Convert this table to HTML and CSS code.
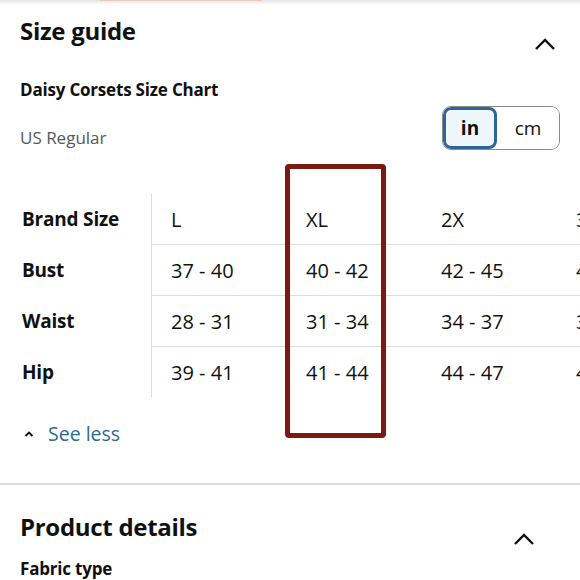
FILE: index.html
```html
<!DOCTYPE html>
<html lang="en">
<head>
  <meta charset="UTF-8" />
  <meta name="viewport" content="width=device-width, initial-scale=1.0"/>
  <title>Size guide</title>
  <link rel="stylesheet" href="styles.css">
</head>
<body>
  <div class="topbar"><span class="topbar-tab"></span></div>

  <section class="panel size-guide">
    <div class="panel-head">
      <h2>Size guide</h2>
      <svg class="chevron" width="22" height="14" viewBox="0 0 22 14">
        <path d="M2 12 L11 3 L20 12" fill="none" stroke="#111" stroke-width="2.4"/>
      </svg>
    </div>

    <h3>Daisy Corsets Size Chart</h3>

    <div class="unit-row">
      <span class="region">US Regular</span>
      <div class="unit-toggle">
        <button class="unit active">in</button>
        <button class="unit">cm</button>
      </div>
    </div>

    <div class="chart-wrap">
      <table class="chart">
        <tr>
          <th>Brand Size</th>
          <td>L</td>
          <td>XL</td>
          <td>2X</td>
          <td>3X</td>
        </tr>
        <tr>
          <th>Bust</th>
          <td>37 - 40</td>
          <td>40 - 42</td>
          <td>42 - 45</td>
          <td>45 - 48</td>
        </tr>
        <tr>
          <th>Waist</th>
          <td>28 - 31</td>
          <td>31 - 34</td>
          <td>34 - 37</td>
          <td>37 - 40</td>
        </tr>
        <tr>
          <th>Hip</th>
          <td>39 - 41</td>
          <td>41 - 44</td>
          <td>44 - 47</td>
          <td>47 - 50</td>
        </tr>
      </table>
      <div class="highlight"></div>
    </div>

    <a href="#" class="see-less">
      <svg width="10" height="7" viewBox="0 0 10 7">
        <path d="M1.5 6 L5 2.5 L8.5 6" fill="none" stroke="#111" stroke-width="1.8"/>
      </svg>
      See less
    </a>
  </section>

  <section class="panel details">
    <div class="panel-head">
      <h2>Product details</h2>
      <svg class="chevron" width="22" height="14" viewBox="0 0 22 14">
        <path d="M2 12 L11 3 L20 12" fill="none" stroke="#111" stroke-width="2.4"/>
      </svg>
    </div>
    <h3>Fabric type</h3>
  </section>
</body>
</html>
```

FILE: styles.css
```css
body {
  margin: 0;
  font-family: "Open Sans", "Noto Sans", sans-serif;
  color: #0f1111;
  background: #fff;
  overflow: hidden;
}

.topbar {
  height: 5px;
  background: linear-gradient(#e4e4e4, #fff);
}

.topbar-tab {
  display: block;
  margin-left: 100px;
  width: 162px;
  height: 1px;
  background: #e8c9bd;
}

.panel {
  padding: 0 20px;
}

.panel-head {
  display: flex;
  justify-content: space-between;
  align-items: flex-end;
}

.panel h2 {
  margin: 0;
  font-size: 24px;
  line-height: 32px;
  font-weight: 700;
  letter-spacing: -0.3px;
}

.size-guide .panel-head {
  padding-top: 10px;
}

.size-guide .chevron {
  margin-right: 4px;
  margin-bottom: -4px;
}

.panel h3 {
  margin: 0;
  font-size: 17px;
  line-height: 22px;
  font-weight: 700;
  letter-spacing: -0.2px;
}

.size-guide h3 {
  margin-top: 32px;
}

.unit-row {
  display: flex;
  justify-content: space-between;
  align-items: center;
  margin-top: 5px;
}

.region {
  font-size: 17px;
  color: #565959;
  margin-top: 18px;
}

.unit-toggle {
  display: flex;
  height: 42px;
  border: 1px solid #888c8c;
  border-radius: 9px;
  overflow: hidden;
}

.unit {
  font-family: inherit;
  font-size: 19px;
  color: #0f1111;
  background: #fff;
  border: none;
  padding: 0;
  width: 62px;
}

.unit.active {
  width: 54px;
  font-weight: 700;
  background: #edf6fb;
  border: 3px solid #2d6696;
  border-radius: 8px;
}

.chart-wrap {
  position: relative;
  margin: 44px -20px 0 0;
}

.chart {
  border-collapse: collapse;
  table-layout: fixed;
  width: 671px;
  font-size: 20px;
}

.chart th,
.chart td {
  height: 50px;
  padding: 0;
  text-align: left;
  font-weight: 400;
  white-space: nowrap;
}

.chart th {
  width: 129px;
  padding-left: 2px;
  font-size: 19px;
  font-weight: 700;
  letter-spacing: -0.2px;
  border-right: 1px solid #dddddd;
}

.chart td {
  width: 116px;
  padding-left: 19px;
  border-bottom: 1px solid #dddddd;
}

.chart tr:last-child td {
  border-bottom: none;
}

.highlight {
  position: absolute;
  left: 265px;
  top: -30px;
  width: 91px;
  height: 264px;
  border: 5px solid #7b1a10;
  border-radius: 4px;
}

.see-less {
  display: flex;
  align-items: center;
  gap: 14px;
  margin-top: 23px;
  padding-left: 4px;
  font-size: 19.5px;
  color: #2c6a94;
  text-decoration: none;
}

.details {
  margin-top: 36px;
  border-top: 2px solid #dddddd;
}

.details .panel-head {
  padding-top: 26px;
}

.details .chevron {
  margin-right: 25px;
  margin-bottom: -3px;
}

.details h3 {
  margin-top: 15px;
}
```
